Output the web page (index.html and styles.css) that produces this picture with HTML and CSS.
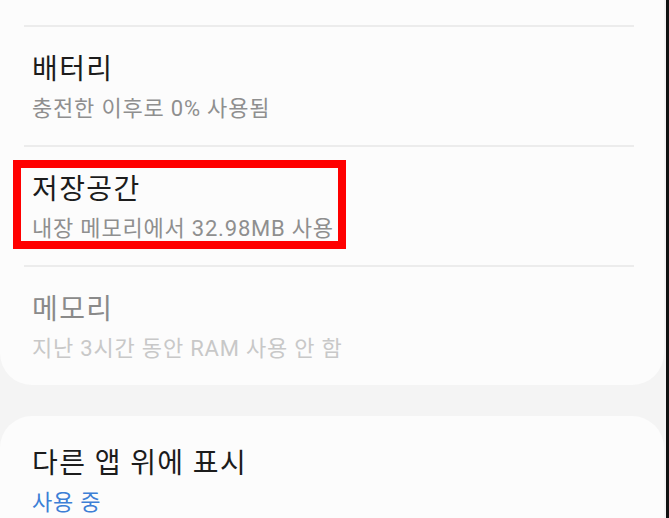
FILE: index.html
```html
<!DOCTYPE html>
<html lang="ko">
  <head>
    <meta charset="UTF-8" />
    <meta name="viewport" content="width=device-width, initial-scale=1.0" />
    <title>애플리케이션 정보</title>
    <link rel="stylesheet" href="styles.css">
  </head>
  <body>
    <div class="screen">
      <div class="content">
        <div class="card card-top">
          <div class="divider"></div>
          <div class="item">
            <div class="title">배터리</div>
            <div class="summary">충전한 이후로 0% 사용됨</div>
          </div>
          <div class="divider"></div>
          <div class="item">
            <div class="title">저장공간</div>
            <div class="summary">내장 메모리에서 32.98MB 사용</div>
            <div class="highlight"></div>
          </div>
          <div class="divider"></div>
          <div class="item item-last disabled">
            <div class="title">메모리</div>
            <div class="summary">지난 3시간 동안 RAM 사용 안 함</div>
          </div>
        </div>
        <div class="card card-bottom">
          <div class="item item-first">
            <div class="title">다른 앱 위에 표시</div>
            <div class="summary accent">사용 중</div>
          </div>
        </div>
      </div>
      <div class="edge"></div>
    </div>
  </body>
</html>
```

FILE: styles.css
```css
html,
body {
  margin: 0;
  height: 100%;
  overflow: hidden;
}

body {
  background-color: #f4f4f4;
  font-family: Roboto, "Noto Sans CJK KR", sans-serif;
}

.screen {
  display: flex;
  height: 100%;
}

.content {
  flex: 1;
  padding-right: 2px;
}

.edge {
  width: 3px;
  background-color: #111111;
}

.card {
  background-color: #fcfcfc;
}

.card-top {
  padding-top: 25px;
  border-radius: 0 0 32px 32px;
}

.card-bottom {
  margin-top: 31px;
  border-radius: 32px 32px 0 0;
  min-height: 200px;
}

.divider {
  height: 2px;
  margin: 0 30px 0 24px;
  background-color: #ececec;
}

.item {
  position: relative;
  padding: 23px 32px 19px;
}

.item-last {
  padding-bottom: 19px;
}

.item-first {
  padding-top: 28px;
}

.title {
  font-size: 28px;
  line-height: 40px;
  letter-spacing: 1.4px;
  color: #1c1c1c;
}

.summary {
  margin-top: 2px;
  font-size: 22px;
  line-height: 34px;
  letter-spacing: 0.8px;
  color: #8f8f8f;
}

.disabled .title {
  color: #8a8a8a;
}

.disabled .summary {
  color: #c8c8c8;
}

.accent {
  color: #3d7fd6;
}

.highlight {
  position: absolute;
  left: 13px;
  top: 13px;
  width: 317px;
  height: 73px;
  border: 8px solid #ff0000;
}
```
